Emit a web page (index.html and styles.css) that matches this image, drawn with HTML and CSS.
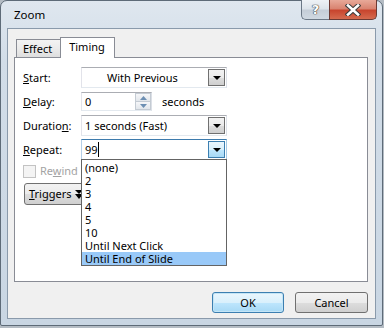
FILE: index.html
```html
<!DOCTYPE html>
<html>
<head>
<meta charset="utf-8">
<link rel="stylesheet" href="styles.css">
</head>
<body>
<div class="window">
  <div class="titlebar">
    <span class="title">Zoom</span>
    <div class="caption">
      <div class="cap help"><span>?</span></div>
      <div class="cap close">
        <svg width="16" height="12" viewBox="0 0 16 12"><path d="M3 1.5 L13 10.5 M13 1.5 L3 10.5" stroke="#3b3b3b" stroke-width="4.6" stroke-linecap="square"/><path d="M3 1.5 L13 10.5 M13 1.5 L3 10.5" stroke="#ffffff" stroke-width="2.6" stroke-linecap="square"/></svg>
      </div>
    </div>
  </div>
  <div class="client">
    <div class="tabs">
      <div class="tab">Effect</div>
      <div class="tab active">Timing</div>
    </div>
    <div class="panel">
      <div class="form">
        <label class="lbl"><u>S</u>tart:</label>
        <div class="combo">
          <span class="val center">With Previous</span>
          <span class="drop"><i class="arrow"></i></span>
        </div>
        <label class="lbl"><u>D</u>elay:</label>
        <div class="delayrow">
          <div class="spin">
            <span class="val">0</span>
            <span class="spinbtns">
              <span class="sb up"><svg width="7" height="4" viewBox="0 0 7 4"><path d="M0 4 L3.5 0 L7 4Z" fill="#6d8fb3"/></svg></span>
              <span class="sb down"><svg width="7" height="4" viewBox="0 0 7 4"><path d="M0 0 L3.5 4 L7 0Z" fill="#6d8fb3"/></svg></span>
            </span>
          </div>
          <span class="unit">seconds</span>
        </div>
        <label class="lbl">Duratio<u>n</u>:</label>
        <div class="combo">
          <span class="val">1 seconds (Fast)</span>
          <span class="drop"><i class="arrow"></i></span>
        </div>
        <label class="lbl"><u>R</u>epeat:</label>
        <div class="combo focus">
          <span class="val">99<i class="caret"></i></span>
          <span class="drop hot"><i class="arrow"></i></span>
          <ul class="list">
            <li>(none)</li>
            <li>2</li>
            <li>3</li>
            <li>4</li>
            <li>5</li>
            <li>10</li>
            <li>Until Next Click</li>
            <li class="sel">Until End of Slide</li>
          </ul>
        </div>
      </div>
      <div class="check">
        <span class="box"></span>
        <span class="checklbl">Re<u>w</u>ind</span>
      </div>
      <div class="triggers">
        <span><u>T</u>riggers</span>
        <svg width="8" height="9" viewBox="0 0 8 9"><path d="M0 0 H8 L4 4Z M0 4 H8 L4 9Z" fill="#000"/></svg>
      </div>
    </div>
    <div class="buttons">
      <div class="btn default">OK</div>
      <div class="btn">Cancel</div>
    </div>
  </div>
</div>
</body>
</html>
```
FILE: styles.css
```css
html, body {
  margin: 0;
  padding: 0;
}
body {
  width: 384px;
  height: 328px;
  background: #b4bcc4;
  font-family: "Noto Sans", "Segoe UI", sans-serif;
  font-size: 11px;
  color: #000;
  overflow: hidden;
}
.window {
  box-sizing: border-box;
  width: 383px;
  height: 326px;
  border: 1px solid #5e6b78;
  border-radius: 7px 7px 2px 2px;
  background: linear-gradient(180deg, #dfe7ef 0px, #d2dde8 60px, #c9d6e3 100%);
  padding: 0 6px 6px 6px;
  display: flex;
  flex-direction: column;
}
.titlebar {
  height: 27px;
  display: flex;
  align-items: flex-start;
}
.title {
  padding-left: 7px;
  padding-top: 6px;
  font-size: 11.5px;
  line-height: 16px;
}
.caption {
  margin-left: auto;
  margin-top: -1px;
  margin-right: -1px;
  display: flex;
}
.cap {
  height: 19px;
  border: 1px solid #6b7886;
  border-top: none;
  display: flex;
  align-items: center;
  justify-content: center;
}
.help {
  width: 27px;
  border-right: none;
  border-radius: 0 0 0 5px;
  background: linear-gradient(180deg, #eef2f6 0%, #dde4eb 45%, #c5ced8 55%, #d0d9e2 100%);
}
.help span {
  font-family: "DejaVu Sans", sans-serif;
  font-weight: bold;
  font-size: 13px;
  color: #fff;
  text-shadow: 0 0 1px #3b3b3b, 0 0 1px #3b3b3b, 0 0 1px #3b3b3b;
  line-height: 13px;
}
.close {
  width: 46px;
  border-radius: 0 0 5px 0;
  border-color: #6c3a34;
  background: linear-gradient(180deg, #e8a999 0%, #d98471 45%, #c8452e 55%, #d56b4f 100%);
}
.client {
  flex: 1;
  border: 1px solid #8a9aab;
  background: #f0f0f0;
  padding: 8px 7px 0 6px;
  display: flex;
  flex-direction: column;
}
.tabs {
  display: flex;
  align-items: flex-end;
  height: 20px;
  padding-left: 2px;
  position: relative;
  z-index: 1;
}
.tab {
  box-sizing: border-box;
  height: 18px;
  padding: 1px 8px 0 6px;
  border: 1px solid #898c95;
  border-bottom: none;
  border-right: none;
  background: linear-gradient(180deg, #f3f3f3 0%, #ebebeb 50%, #dedede 100%);
  line-height: 16px;
}
.tab.active {
  height: 21px;
  margin-bottom: -1px;
  padding: 0 9px 0 8px;
  border-right: 1px solid #898c95;
  background: #fff;
  line-height: 17px;
}
.panel {
  box-sizing: border-box;
  height: 225px;
  border: 1px solid #898c95;
  background: #fff;
  padding: 9px 8px 0 8px;
}
.form {
  display: grid;
  grid-template-columns: 58px 146px;
  grid-auto-rows: 21px;
  row-gap: 3px;
  align-items: center;
}
.lbl {
  line-height: 16px;
}
.combo {
  position: relative;
  box-sizing: border-box;
  height: 21px;
  border: 1px solid #abadb3;
  border-color: #abadb3 #dbdfe6 #e3e9ef #e2e3ea;
  display: flex;
  align-items: center;
  padding: 0 1px 0 3px;
}
.combo.focus {
  border-color: #3d7bad #a4c9e3 #b7d9ed #b5cfe7;
}
.val {
  flex: 1;
  line-height: 16px;
  white-space: nowrap;
}
.val.center {
  padding-left: 22px;
}
.caret {
  display: inline-block;
  width: 1px;
  height: 15px;
  background: #000;
  vertical-align: -3px;
}
.drop {
  box-sizing: border-box;
  width: 17px;
  height: 17px;
  border: 1px solid #707070;
  background: linear-gradient(180deg, #f2f2f2 0%, #ebebeb 50%, #dddddd 51%, #cfcfcf 100%);
  display: flex;
  align-items: center;
  justify-content: center;
}
.drop.hot {
  border-color: #3c7fb1;
  background: linear-gradient(180deg, #eaf6fd 0%, #d9f0fc 50%, #bee6fd 51%, #a7d9f5 100%);
}
.arrow {
  width: 0;
  height: 0;
  border-left: 4px solid transparent;
  border-right: 4px solid transparent;
  border-top: 4px solid #000;
  margin-top: 1px;
}
.delayrow {
  display: flex;
  align-items: center;
}
.spin {
  box-sizing: border-box;
  width: 71px;
  height: 19px;
  border: 1px solid #abadb3;
  border-color: #abadb3 #dbdfe6 #e3e9ef #e2e3ea;
  display: flex;
  align-items: center;
  padding-left: 3px;
}
.spinbtns {
  display: flex;
  flex-direction: column;
  align-self: stretch;
}
.sb {
  box-sizing: border-box;
  width: 16px;
  flex: 1;
  border: 1px solid #c4cbd3;
  background: linear-gradient(180deg, #f6f7f9, #e2e6eb);
  display: flex;
  align-items: center;
  justify-content: center;
}
.sb.up { border-bottom: none; }
.unit {
  margin-left: 10px;
  line-height: 16px;
}
.list {
  position: absolute;
  top: 100%;
  left: -1px;
  right: -1px;
  margin: 0;
  padding: 1px 0 0 0;
  list-style: none;
  border: 1px solid #646464;
  background: #fff;
  z-index: 5;
}
.list li {
  height: 13px;
  line-height: 13px;
  padding-left: 3px;
  white-space: nowrap;
}
.list li.sel {
  background: #99c9f8;
}
.check {
  display: flex;
  align-items: center;
  margin-top: 4px;
  height: 14px;
}
.box {
  box-sizing: border-box;
  width: 13px;
  height: 13px;
  border: 1px solid #c3c3c3;
  background: #f4f4f4;
}
.checklbl {
  margin-left: 4px;
  color: #a3a3a3;
  line-height: 16px;
}
.triggers {
  box-sizing: border-box;
  margin-top: 5px;
  margin-left: 1px;
  width: 64px;
  height: 22px;
  border: 1px solid #707070;
  border-radius: 3px;
  background: linear-gradient(180deg, #f2f2f2 0%, #ebebeb 50%, #dddddd 51%, #cfcfcf 100%);
  display: flex;
  align-items: center;
  gap: 3px;
  padding-left: 4px;
  line-height: 16px;
}
.buttons {
  display: flex;
  justify-content: flex-end;
  gap: 11px;
  margin-top: 10px;
  padding-right: 0;
}
.btn {
  box-sizing: border-box;
  width: 73px;
  height: 21px;
  border: 1px solid #707070;
  border-radius: 3px;
  background: linear-gradient(180deg, #f2f2f2 0%, #ebebeb 50%, #dddddd 51%, #cfcfcf 100%);
  text-align: center;
  line-height: 19px;
}
.btn.default {
  width: 72px;
  border-color: #3c7fb1;
  background: linear-gradient(180deg, #eaf6fd 0%, #d9f0fc 50%, #bee6fd 51%, #a7d9f5 100%);
  box-shadow: inset 0 0 0 1px #c4e5f6;
}
```
